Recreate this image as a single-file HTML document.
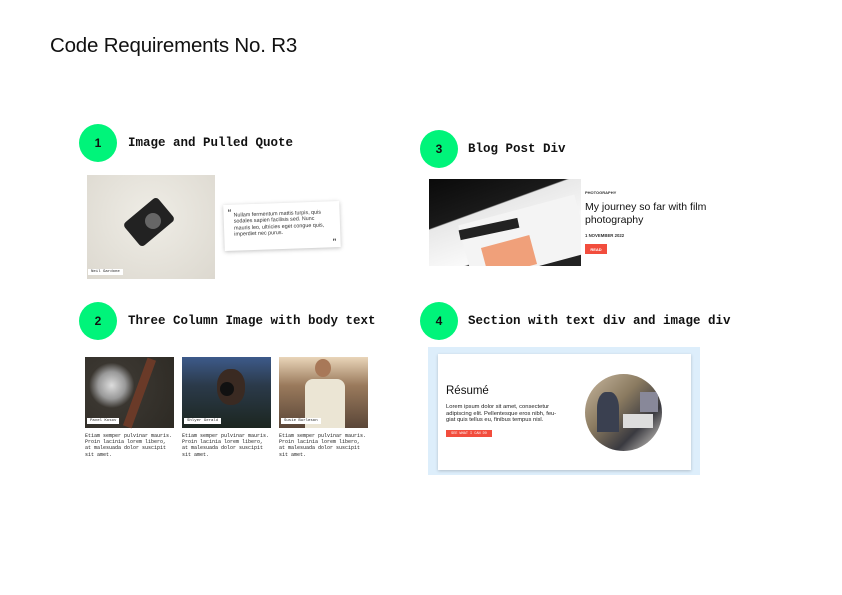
<!DOCTYPE html>
<html><head><meta charset="utf-8"><style>
*{margin:0;padding:0;box-sizing:border-box}
body{width:842px;height:595px;background:#fff;position:relative;overflow:hidden;font-family:"Liberation Sans",sans-serif;color:#111}
.a{position:absolute}
.c{position:absolute;width:38px;height:38px;border-radius:50%;background:#00f47a;font:bold 12px "Liberation Sans",sans-serif;display:flex;align-items:center;justify-content:center}
.h{position:absolute;font:bold 12.5px "Liberation Mono",monospace}
.lab{position:absolute;background:#fff;font:4px "Liberation Mono",monospace;padding:1px 3px;color:#222}
.body{position:absolute;font:5px/6.2px "Liberation Mono",monospace;color:#222;width:88px}
</style></head><body>
<div class="a" style="left:50px;top:34px;font-size:20.5px;color:#111;letter-spacing:-0.2px">Code Requirements No. R3</div>

<div class="c" style="left:79px;top:124px">1</div>
<div class="h" style="left:128px;top:136px">Image and Pulled Quote</div>
<div class="c" style="left:420px;top:130px">3</div>
<div class="h" style="left:468px;top:142px">Blog Post Div</div>
<div class="c" style="left:79px;top:302px">2</div>
<div class="h" style="left:128px;top:314px">Three Column Image with body text</div>
<div class="c" style="left:420px;top:302px">4</div>
<div class="h" style="left:468px;top:314px">Section with text div and image div</div>

<!-- 1 -->
<div class="a" style="left:87px;top:175px;width:128px;height:104px;background:radial-gradient(ellipse at 50% 40%,#efede6,#dcd8cf)">
  <div class="a" style="left:40px;top:32px;width:44px;height:30px;background:#222;border-radius:4px;transform:rotate(-40deg)"></div>
  <div class="a" style="left:58px;top:38px;width:16px;height:16px;background:#666;border-radius:50%"></div>
  <div class="lab" style="left:1px;top:94px">Neil Gardone</div>
</div>
<div class="a" style="left:224px;top:203px;width:116px;height:46px;background:#fff;box-shadow:0 1px 4px rgba(0,0,0,.25);transform:rotate(-2deg);font-size:5.4px;line-height:6.3px;color:#333;padding:8px 14px 0 10px">
  <span class="a" style="left:4px;top:5px;font-size:8px;font-weight:bold">“</span>
  Nullam fermentum mattis turpis, quis sodales sapien facilisis sed. Nunc mauris leo, ultricies eget congue quis, imperdiet nec purus.
  <span class="a" style="right:4px;bottom:2px;font-size:8px;font-weight:bold">”</span>
</div>

<!-- 3 -->
<div class="a" style="left:429px;top:179px;width:152px;height:87px;background:linear-gradient(160deg,#0a0a0a 0%,#1a1a1a 35%,#e8e8e8 36%,#fafafa 70%,#222 71%);overflow:hidden">
  <div class="a" style="left:35px;top:30px;width:120px;height:60px;background:#f4f4f4;transform:rotate(-15deg)"></div>
  <div class="a" style="left:30px;top:45px;width:60px;height:10px;background:#222;transform:rotate(-12deg)"></div>
  <div class="a" style="left:55px;top:62px;width:50px;height:30px;background:#f0a07a;transform:rotate(-15deg)"></div>
</div>
<div class="a" style="left:585px;top:190px;font-size:4px;font-weight:bold;color:#333">PHOTOGRAPHY</div>
<div class="a" style="left:585px;top:201px;font-size:10.5px;line-height:13px;color:#111;width:140px">My journey so far with film photography</div>
<div class="a" style="left:585px;top:233px;font-size:4.3px;font-weight:bold;color:#333">1 NOVEMBER 2022</div>
<div class="a" style="left:585px;top:244px;width:22px;height:10px;background:#f24d3d;color:#fff;font-size:4px;font-weight:bold;display:flex;align-items:center;justify-content:center">READ</div>

<!-- 2 -->
<div class="a" style="left:85px;top:357px;width:89px;height:71px;background:radial-gradient(circle at 30% 40%,#ddd 0,#999 18%,#3a3630 30%,#2d2a24 100%)">
  <div class="a" style="left:50px;top:0;width:9px;height:72px;background:#6a3a28;transform:rotate(20deg)"></div>
  <div class="lab" style="left:2px;top:61px">Pavel Kosov</div>
</div>
<div class="a" style="left:182px;top:357px;width:89px;height:71px;background:linear-gradient(180deg,#3d5a8a 0%,#2b3a4a 40%,#1c2620 100%)">
  <div class="a" style="left:35px;top:12px;width:28px;height:36px;background:#3a2a22;border-radius:45%"></div>
  <div class="a" style="left:38px;top:25px;width:14px;height:14px;background:#111;border-radius:50%"></div>
  <div class="lab" style="left:2px;top:61px">Shlyer Gerald</div>
</div>
<div class="a" style="left:279px;top:357px;width:89px;height:71px;background:linear-gradient(180deg,#e9d5b9 0%,#9a7a5c 40%,#5a4638 100%)">
  <div class="a" style="left:26px;top:22px;width:40px;height:49px;background:#ebe5d4;border-radius:8px 8px 0 0"></div>
  <div class="a" style="left:36px;top:2px;width:16px;height:18px;background:#a87858;border-radius:50%"></div>
  <div class="lab" style="left:2px;top:61px">Susie Burleson</div>
</div>
<div class="body" style="left:85px;top:433px">Etiam semper pulvinar mauris. Proin lacinia lorem libero, at malesuada dolor suscipit sit amet.</div>
<div class="body" style="left:182px;top:433px">Etiam semper pulvinar mauris. Proin lacinia lorem libero, at malesuada dolor suscipit sit amet.</div>
<div class="body" style="left:279px;top:433px">Etiam semper pulvinar mauris. Proin lacinia lorem libero, at malesuada dolor suscipit sit amet.</div>

<!-- 4 -->
<div class="a" style="left:428px;top:347px;width:272px;height:128px;background:#ddeefb"></div>
<div class="a" style="left:438px;top:354px;width:253px;height:116px;background:#fff;box-shadow:0 1px 3px rgba(0,0,0,.2)"></div>
<div class="a" style="left:446px;top:385px;font-size:11.5px;color:#111">Résumé</div>
<div class="a" style="left:446px;top:404px;width:113px;font-size:5.8px;line-height:6.6px;color:#222">Lorem ipsum dolor sit amet, consectetur adipiscing elit. Pellentesque eros nibh, feu-giat quis tellus eu, finibus tempus nisl.</div>
<div class="a" style="left:446px;top:430px;width:46px;height:7px;background:#f24d3d;color:#fff;font:3.5px 'Liberation Mono',monospace;display:flex;align-items:center;justify-content:center">SEE WHAT I CAN DO</div>
<div class="a" style="left:585px;top:374px;width:77px;height:77px;border-radius:50%;overflow:hidden;background:linear-gradient(135deg,#c9b8a0 0%,#8a7a60 40%,#3a3a40 70%,#e8e4dc 100%)">
  <div class="a" style="left:12px;top:18px;width:22px;height:40px;background:#3a4050;border-radius:40% 40% 0 0"></div>
  <div class="a" style="left:55px;top:18px;width:18px;height:20px;background:#889"></div>
  <div class="a" style="left:38px;top:40px;width:30px;height:14px;background:#ddd"></div>
</div>
</body></html>
